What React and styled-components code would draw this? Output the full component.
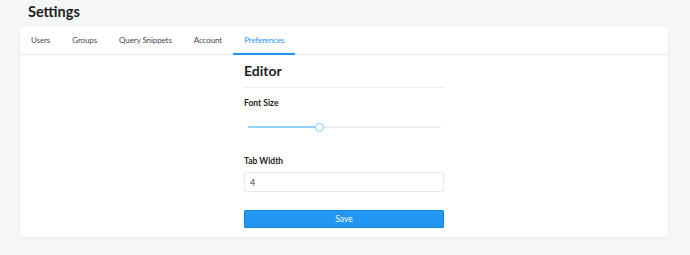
import React, { useState } from 'react'
import styled, { createGlobalStyle } from 'styled-components'

const GlobalStyle = createGlobalStyle`
  html, body {
    margin: 0;
    padding: 0;
    background: #f5f6f8;
    font-family: Lato, 'Noto Sans', sans-serif;
    color: #222;
  }
  * { box-sizing: border-box; }
`

const Page = styled.div`
  padding: 0 22px 0 20px;
  min-height: 255px;
`

const Title = styled.h1`
  margin: 0;
  padding: 1px 0 0 8px;
  height: 27px;
  font-size: 14.5px;
  font-weight: 700;
  line-height: 22px;
  color: #1d1d1f;
`

const Card = styled.div`
  background: #fff;
  border-radius: 2px;
  box-shadow: 0 1px 3px rgba(0, 0, 0, 0.06);
  padding-bottom: 9px;
`

const Tabs = styled.nav`
  display: flex;
  height: 28px;
  border-bottom: 1px solid #e9eaed;
`

const Tab = styled.div`
  padding: 0 11px;
  height: 28px;
  display: flex;
  align-items: center;
  font-size: 8px;
  letter-spacing: -0.1px;
  color: ${p => (p.$active ? '#2196f3' : '#4a4a4a')};
  border-bottom: 2px solid ${p => (p.$active ? '#2196f3' : 'transparent')};
  margin-bottom: -1px;
  cursor: pointer;
`

const Content = styled.div`
  width: 200px;
  margin: 0 auto;
  padding-top: 6px;
`

const Heading = styled.h2`
  margin: 0;
  font-size: 14px;
  font-weight: 700;
  line-height: 20px;
  padding-bottom: 6px;
  border-bottom: 1px solid #eeeff1;
  color: #1d1d1f;
`

const Label = styled.div`
  font-size: 8.5px;
  font-weight: 700;
  color: #222;
  margin-top: ${p => p.$top}px;
`

const SliderWrap = styled.div`
  position: relative;
  height: 10px;
  margin: 14px 3px 0 4px;
  display: flex;
  align-items: center;
`

const Track = styled.div`
  width: 100%;
  height: 2px;
  background: #eeeeee;
  border-radius: 1px;
`

const Fill = styled.div`
  position: absolute;
  left: 0;
  top: 4px;
  height: 2px;
  background: #90d2fb;
  border-radius: 1px;
`

const Thumb = styled.div`
  position: absolute;
  top: 1px;
  width: 9px;
  height: 9px;
  margin-left: -4px;
  border-radius: 50%;
  background: #fff;
  border: 1.5px solid #7cc8f8;
`

const Input = styled.input`
  display: block;
  width: 200px;
  height: 20px;
  margin-top: 6px;
  border: 1px solid #e6e7ea;
  border-radius: 2px;
  padding: 0 5px;
  font-family: inherit;
  font-size: 9px;
  color: #444;
  outline: none;
`

const Button = styled.button`
  display: block;
  width: 200px;
  height: 18px;
  margin-top: 18px;
  background: #2196f3;
  border: 1px solid #1a86dd;
  border-radius: 1px;
  color: #fff;
  font-family: inherit;
  font-size: 8.5px;
  padding: 0;
  cursor: pointer;
`

const tabs = ['Users', 'Groups', 'Query Snippets', 'Account', 'Preferences']

export default function App() {
  const [value] = useState(37)
  return (
    <>
      <GlobalStyle />
      <Page>
        <Title>Settings</Title>
        <Card>
          <Tabs>
            {tabs.map(t => (
              <Tab key={t} $active={t === 'Preferences'}>{t}</Tab>
            ))}
          </Tabs>
          <Content>
            <Heading>Editor</Heading>
            <Label $top={10}>Font Size</Label>
            <SliderWrap>
              <Track />
              <Fill style={{ width: `${value}%` }} />
              <Thumb style={{ left: `${value}%` }} />
            </SliderWrap>
            <Label $top={24}>Tab Width</Label>
            <Input defaultValue="4" />
            <Button>Save</Button>
          </Content>
        </Card>
      </Page>
    </>
  )
}
